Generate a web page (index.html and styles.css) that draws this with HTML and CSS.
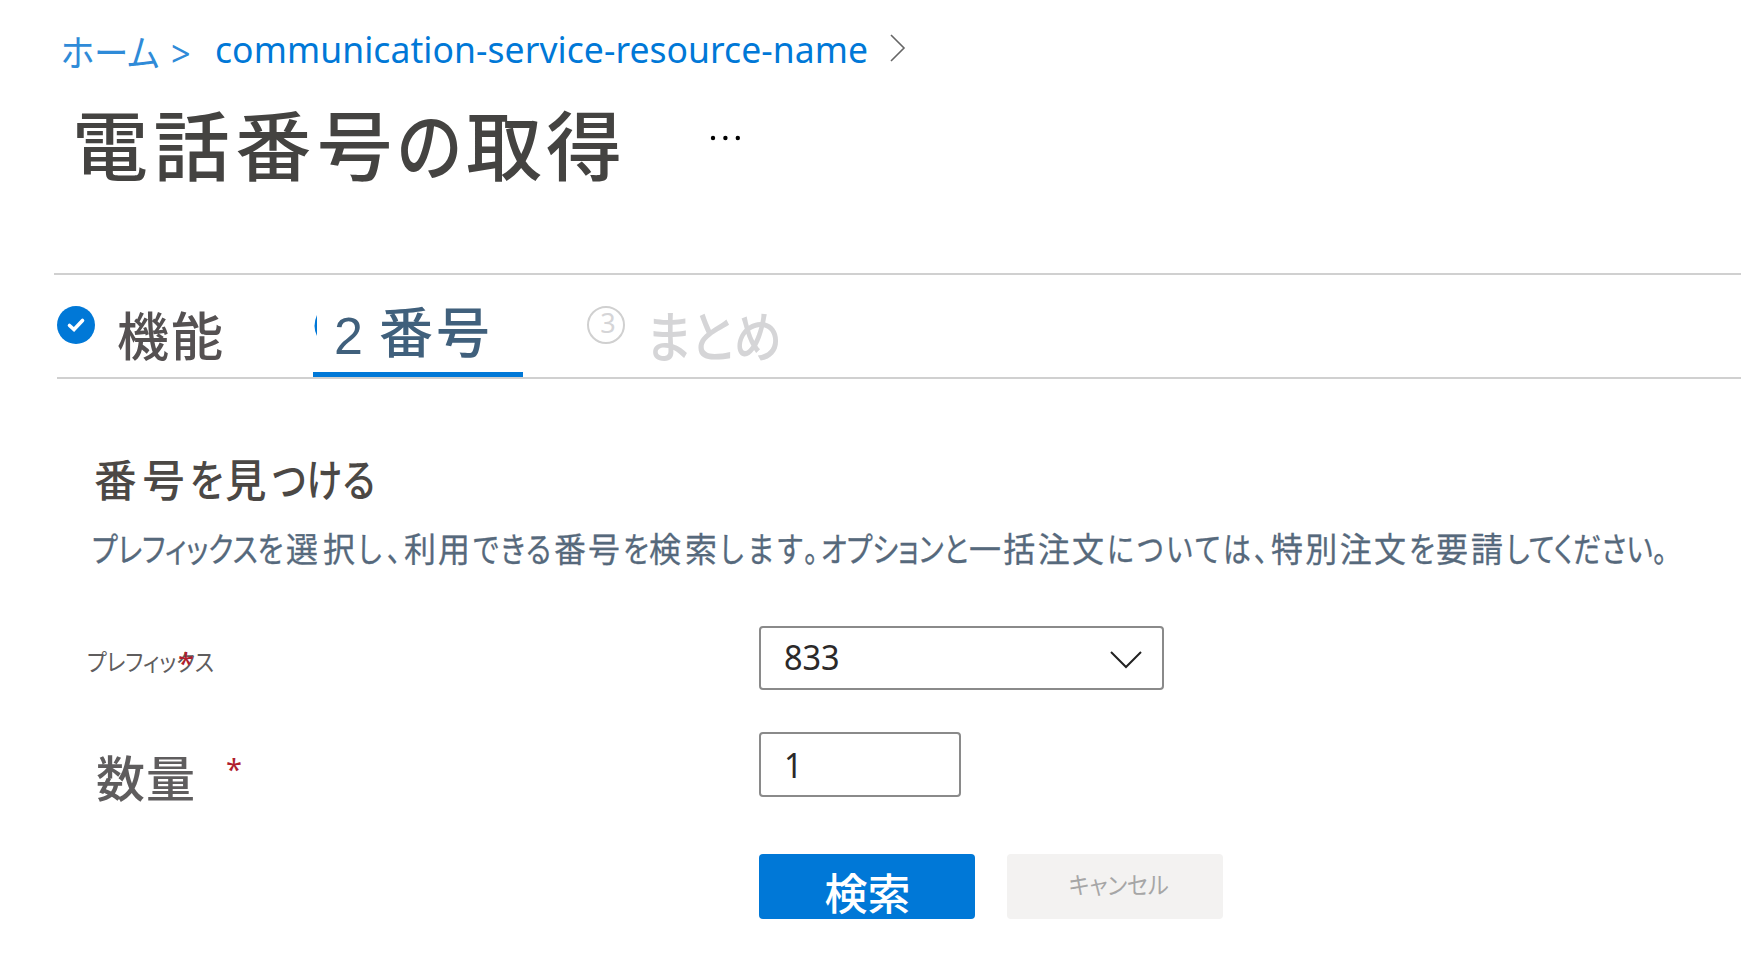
FILE: index.html
```html
<!DOCTYPE html>
<html lang="ja">
<head>
<meta charset="utf-8">
<title>電話番号の取得</title>
<link rel="stylesheet" href="styles.css">
</head>
<body>
<nav class="breadcrumb">
  <a class="crumb-home">ホーム</a>
  <span class="crumb-sep">&gt;</span>
  <a class="crumb-resource">communication-service-resource-name</a>
  <svg class="crumb-chevron" width="16" height="28" viewBox="0 0 16 28"><path d="M1 1 14 14 1 27" fill="none" stroke="#666" stroke-width="1.6"/></svg>
</nav>
<header class="header">
  <h1 class="title"><span class="title-a">電話番号</span><span class="title-b">の</span><span class="title-c">取得</span></h1>
  <svg class="more" width="30" height="6" viewBox="0 0 30 6"><circle cx="3" cy="3" r="2.2"/><circle cx="15.4" cy="3" r="2.2"/><circle cx="27.8" cy="3" r="2.2"/></svg>
</header>
<div class="tabs">
  <div class="tab tab-done">
    <svg class="badge" width="38" height="38" viewBox="0 0 38 38"><circle cx="19" cy="19" r="19" fill="#0078d7"/><path d="M12.500 19.500 17 23.500 25.500 14.500" fill="none" stroke="#fff" stroke-width="3.600" stroke-linecap="round"/></svg>
    <span class="tab-text">機能</span>
  </div>
  <div class="tab tab-active">
    <svg class="sliver" width="4" height="22" viewBox="0 0 4 22"><path d="M3 0Q-2 11 3 21Z" fill="#0078d7"/></svg>
    <span class="tab-num">2</span>
    <span class="tab-text">番号</span>
  </div>
  <div class="tab tab-next">
    <span class="ring">3</span>
    <span class="tab-text">まとめ</span>
  </div>
</div>
<main class="main">
  <h2 class="heading runs"><span><b>番号</b></span><span class="kana"><b>を</b></span><span><b>見</b></span><span class="kana"><b>つける</b></span></h2>
  <p class="desc runs"><span class="kana"><b>プレフィックスを</b></span><span><b>選択</b></span><span class="kana"><b>し、</b></span><span><b>利用</b></span><span class="kana"><b>できる</b></span><span><b>番号</b></span><span class="kana"><b>を</b></span><span><b>検索</b></span><span class="kana"><b>します。</b></span><span class="kana"><b>オプションと</b></span><span><b>一括注文</b></span><span class="kana"><b>については、</b></span><span><b>特別注文</b></span><span class="kana"><b>を</b></span><span><b>要請</b></span><span class="kana"><b>してください。</b></span></p>
  <div class="form">
    <div class="row row-prefix">
      <label class="label-prefix"><span class="label-text">プレフィックス</span><span class="star">*</span></label>
      <div class="select"><span class="value">833</span><svg width="32" height="18" viewBox="0 0 32 18"><path d="M1 1 16 16 31 1" fill="none" stroke="#222" stroke-width="2"/></svg></div>
    </div>
    <div class="row row-qty">
      <label class="label-qty"><span class="label-text">数量</span><span class="star">*</span></label>
      <div class="input"><span class="value">1</span></div>
    </div>
    <div class="buttons">
      <button class="btn primary"><span>検索</span></button>
      <button class="btn cancel"><span>キャンセル</span></button>
    </div>
  </div>
</main>
</body>
</html>
```

FILE: styles.css
```css
* { box-sizing: border-box; }
body {
  margin: 0;
  height: 973px;
  overflow: hidden;
  background: #fff;
  font-family: "Noto Sans", "Noto Sans CJK JP", sans-serif;
  color: #444;
}
h1, h2, p { margin: 0; font-weight: 400; }
b { font-weight: inherit; }
span, a { white-space: nowrap; }

.breadcrumb { display: flex; height: 92px; padding-left: 61px; color: #0078d7; }
.crumb-home {
  width: 110px; padding-top: 24px;
  font: 400 37px/54px "Noto Sans CJK JP", sans-serif;
  font-feature-settings: "palt";
  color: #2f8bd8;
  transform: scaleX(.93); transform-origin: left;
}
.crumb-sep { width: 44px; padding-top: 29px; font-size: 36px; line-height: 50px; color: #2f8bd8; transform: scaleX(.95); transform-origin: left; }
.crumb-resource { width: 675px; padding-top: 22px; font-size: 35.5px; line-height: 54px; letter-spacing: .06px; }
.crumb-chevron { margin-top: 34px; }

.header { display: flex; height: 181px; padding-left: 73px; }
.title {
  display: flex; width: 637px;
  font: 500 76px/100px "Noto Sans CJK JP", sans-serif;
  font-feature-settings: "palt";
  color: #444341;
}
.title-a { width: 325px; letter-spacing: 5.6px; margin-left: -1px; }
.title-b { width: 69px; transform: scaleX(.88); transform-origin: left; }
.title-c { letter-spacing: 4px; }
.more { margin-top: 43px; fill: #000; }

.tabs {
  position: relative;
  display: flex; height: 106px;
  margin-left: 57px;
  border-bottom: 2px solid #d0d0d0;
}
.tabs::before { content: ""; position: absolute; left: -3px; right: 0; top: 0; height: 2px; background: #d0d0d0; }
.tab { display: flex; height: 104px; }
.tab-text { font: 500 52px/74px "Noto Sans CJK JP", sans-serif; margin-top: 24px; letter-spacing: 2px; }
.tab-done { width: 256px; color: #555152; }
.badge { margin: 33px 22px 0 0; flex: none; }
.tab-active { width: 210px; color: #40607c; border-bottom: 5px solid #0078d7; }
.tab-active .tab-text { margin-top: 20px; font-size: 54px; letter-spacing: 3px; }
.sliver { margin: 42px 16px 0 1px; }
.tab-num { width: 45px; margin-top: 26px; font: 400 52px/74px "Liberation Sans", sans-serif; }
.tab-next { padding-left: 64px; color: #d5d5d7; }
.ring {
  width: 38px; height: 38px; margin: 33px 21px 0 0;
  border: 2px solid #d0d0d0; border-radius: 50%;
  font-size: 27px; line-height: 30px; text-align: center; padding-left: 4px;
}
.tab-next .tab-text { margin-top: 23px; font-size: 55px; letter-spacing: 0; font-feature-settings: "palt"; transform: scaleX(.88); transform-origin: left; }

.main { height: 594px; }
.runs { display: flex; font-family: "Noto Sans CJK JP", sans-serif; font-feature-settings: "palt"; }
.runs > span { flex: none; --s: .94; --gap: 3px; padding-right: var(--gap); }
.runs > .kana { --s: .82; }
.runs b { display: block; width: calc(100% / var(--s)); text-align-last: justify; transform: scaleX(var(--s)); transform-origin: left; }

.heading { padding: 69px 0 0 94px; font-size: 44px; line-height: 60px; font-weight: 500; color: #4b4845; }
.heading span:nth-child(1) { width: 96px; --gap: 5px; --s: .97; }
.heading span:nth-child(2) { width: 35px; }
.heading span:nth-child(3) { width: 47px; }
.heading span:nth-child(4) { width: 106px; }

.desc { padding: 15px 0 0 92px; font-size: 34px; line-height: 50px; color: #56697c; -webkit-text-stroke: .3px #56697c; }
.desc span:nth-child(1) { width: 194px; }
.desc span:nth-child(2) { width: 72px; }
.desc span:nth-child(3) { width: 46px; }
.desc span:nth-child(4) { width: 69px; }
.desc span:nth-child(5) { width: 81px; }
.desc span:nth-child(6) { width: 69px; }
.desc span:nth-child(7) { width: 26px; }
.desc span:nth-child(8) { width: 71px; }
.desc span:nth-child(9) { width: 101px; }
.desc span:nth-child(10) { width: 148px; }
.desc span:nth-child(11) { width: 138px; }
.desc span:nth-child(12) { width: 164px; }
.desc span:nth-child(13) { width: 138px; }
.desc span:nth-child(14) { width: 27px; }
.desc span:nth-child(15) { width: 70px; }
.desc span:nth-child(16) { width: 164px; }

.form { padding-top: 53px; }
.row { display: flex; }
.row-prefix { height: 106px; }
.row-qty { height: 122px; }
.label-prefix { position: relative; width: 759px; padding-left: 87px; }
.label-prefix .label-text {
  display: block; padding-top: 17px;
  font: 400 24px/36px "Noto Sans CJK JP", sans-serif; font-feature-settings: "palt";
  color: #5f5d5e; transform: scaleX(.89); transform-origin: left;
}
.star { font-size: 29px; line-height: 40px; color: #b01e2e; }
.label-prefix .star { position: absolute; left: 178px; top: 17px; }
.label-qty { display: flex; width: 759px; padding-left: 96px; }
.label-qty .label-text { width: 130px; padding-top: 9px; letter-spacing: 1px; font: 500 49px/70px "Noto Sans CJK JP", sans-serif; color: #5f5d5e; }
.label-qty .star { margin-top: 17px; }
.select, .input { display: flex; align-items: center; height: 65px; border: 2px solid #8a8a8a; border-radius: 4px; padding-left: 23px; color: #2b2929; }
.select { width: 405px; height: 64px; justify-content: space-between; padding-right: 20px; }
.select svg { margin-top: 3px; }
.select .value { margin-top: -2px; }
.input { width: 202px; }
.value { font-size: 34.5px; line-height: 50px; transform: scaleX(.94); transform-origin: left; }
.buttons { display: flex; gap: 32px; padding-left: 759px; }
.btn { width: 216px; height: 65px; padding: 0; border: 0; border-radius: 4px; font-family: "Noto Sans CJK JP", sans-serif; }
.btn span { display: block; }
.primary { background: #0078d7; color: #fff; font-size: 43px; font-weight: 500; line-height: 60px; }
.primary span { padding: 7px 0 0 1px; }
.cancel { background: #f3f2f1; color: #a6a6a6; font-size: 24px; line-height: 36px; font-feature-settings: "palt"; }
.cancel span { transform: scaleX(.92); padding-left: 8px; margin-top: -5px; }
```
